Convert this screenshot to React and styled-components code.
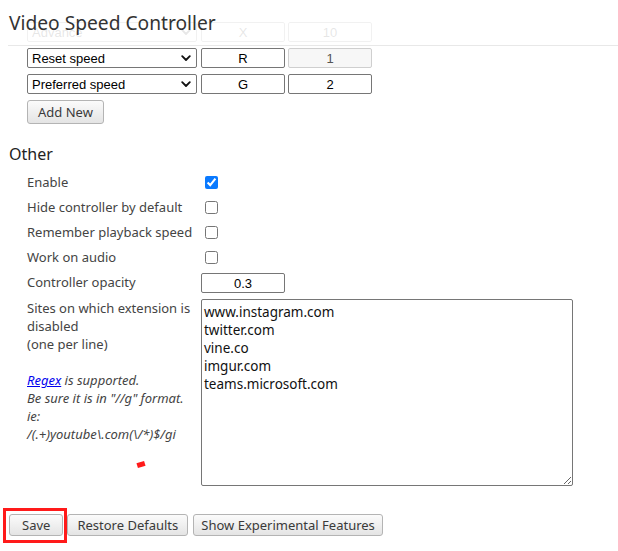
import React from "react";
import styled, { createGlobalStyle } from "styled-components";

const GlobalStyle = createGlobalStyle`
  body {
    margin: 0;
    background: #fff;
    font-family: "Noto Sans", "Liberation Sans", sans-serif;
  }
`;

const Page = styled.div`
  position: relative;
  padding: 0 0 16px 8px;
  width: 610px;
`;

const Header = styled.header`
  position: relative;
  z-index: 1;
  height: 45px;
  background: rgba(255, 255, 255, 0.9);
  border-bottom: 1px solid #e8e8e8;
`;

const Title = styled.h1`
  margin: 0;
  padding: 9px 0 0 1px;
  font-size: 19.2px;
  line-height: 28px;
  font-weight: normal;
  color: #333;
`;

const Shortcuts = styled.section`
  margin-top: -24px;
  padding-left: 19px;
  display: flex;
  flex-direction: column;
  gap: 6px;
`;

const Row = styled.div`
  display: flex;
  align-items: center;
  height: 20px;
`;

const SelectWrap = styled.div`
  position: relative;
  width: 170px;
  height: 20px;
  margin-right: 4px;
`;

const Select = styled.select`
  appearance: none;
  box-sizing: border-box;
  display: block;
  width: 100%;
  height: 100%;
  margin: 0;
  padding: 0 0 0 4px;
  border: 1px solid #767676;
  border-radius: 2px;
  background: #fff;
  font-family: "Liberation Sans", Arial, sans-serif;
  font-size: 13px;
  color: #000;
`;

const Chevron = styled.svg`
  position: absolute;
  right: 6px;
  top: 7px;
  pointer-events: none;
`;

const KeyInput = styled.input`
  box-sizing: border-box;
  width: 84px;
  height: 20px;
  margin: ${(p) => (p.$shift ? "1px 3px 0 0" : "0 3px 0 0")};
  padding: 0;
  border: 1px solid ${(p) => (p.disabled ? "#cfcfcf" : "#767676")};
  border-radius: 2px;
  background: ${(p) => (p.disabled ? "#f7f7f7" : "#fff")};
  text-align: center;
  font-family: "Liberation Sans", Arial, sans-serif;
  font-size: 13px;
  color: ${(p) => (p.disabled ? "#555" : "#000")};
  opacity: 1;
`;

const Button = styled.button`
  box-sizing: border-box;
  height: ${(p) => (p.$tall ? "24px" : "22px")};
  padding: 0 ${(p) => (p.$wide ? "12px" : p.$tall ? "10px" : "9px")};
  border: 1px solid #b4b4b4;
  border-radius: 3px;
  background: linear-gradient(#fbfbfb, #e4e4e4);
  font-family: "Noto Sans", "Liberation Sans", sans-serif;
  font-size: 13px;
  color: #3a3a3a;
  cursor: pointer;
`;

const AddNew = styled(Button)`
  align-self: flex-start;
`;

const Heading = styled.h3`
  margin: 18px 0 6px 1px;
  font-size: 16px;
  line-height: 24px;
  font-weight: normal;
  color: #222;
`;

const OptionsGrid = styled.div`
  display: grid;
  grid-template-columns: 174px 372px;
  grid-auto-rows: minmax(20px, auto);
  row-gap: 5px;
  padding-left: 19px;
`;

const Label = styled.label`
  position: relative;
  font-size: 13px;
  line-height: ${(p) => (p.$multi ? "18px" : "20px")};
  margin-top: ${(p) => (p.$multi ? "1px" : "0")};
  color: #444;
`;

const Check = styled.input.attrs({ type: "checkbox" })`
  width: 13px;
  height: 13px;
  margin: 0 0 0 4px;
  align-self: center;
  accent-color: #0a7aff;
`;

const Note = styled.em`
  display: block;
  margin-top: 18px;
  font-style: italic;
  color: #444;

  a {
    color: #0000ee;
  }
`;

const SitesArea = styled.textarea`
  box-sizing: border-box;
  width: 372px;
  height: 187px;
  margin: 1px 0 0;
  padding: 3px 2px;
  border: 1px solid #767676;
  border-radius: 2px;
  resize: both;
  font-family: "Noto Sans", "Liberation Sans", sans-serif;
  font-size: 13.5px;
  line-height: 18px;
  color: #111;
`;

const Mark = styled.span`
  position: absolute;
  left: 110px;
  top: 163px;
  width: 8px;
  height: 5px;
  background: #ff1a1a;
  transform: rotate(-18deg);
`;

const Actions = styled.div`
  display: flex;
  align-items: flex-start;
  gap: 4px;
  margin-top: 28px;
  padding-left: 1px;
`;

const Highlighted = styled.span`
  position: relative;
  display: inline-flex;
  height: 22px;

  &::after {
    content: "";
    position: absolute;
    left: -6px;
    right: -4px;
    top: -6px;
    bottom: -7px;
    border: 3px solid #ff1a1a;
    pointer-events: none;
  }
`;

const Spaced = styled(Button)`
  margin-left: 1px;
  padding: 0 7px;
`;

const shortcuts = [
  { action: "Advance", key: "X", value: "10" },
  { action: "Reset speed", key: "R", value: "1", locked: true },
  { action: "Preferred speed", key: "G", value: "2" },
];

const toggles = [
  { label: "Enable", checked: true },
  { label: "Hide controller by default" },
  { label: "Remember playback speed" },
  { label: "Work on audio" },
];

const sites = [
  "www.instagram.com",
  "twitter.com",
  "vine.co",
  "imgur.com",
  "teams.microsoft.com",
].join("\n");

function ShortcutRow({ item }) {
  return (
    <Row>
      <SelectWrap>
        <Select defaultValue={item.action}>
          <option>{item.action}</option>
        </Select>
        <Chevron width="10" height="7" viewBox="0 0 10 7">
          <path
            d="M1.2 1.2 5 5l3.8-3.8"
            fill="none"
            stroke="#111"
            strokeWidth="1.8"
            strokeLinecap="round"
            strokeLinejoin="round"
          />
        </Chevron>
      </SelectWrap>
      <KeyInput defaultValue={item.key} />
      <KeyInput defaultValue={item.value} disabled={item.locked} />
    </Row>
  );
}

export default function App() {
  return (
    <>
      <GlobalStyle />
      <Page>
        <Header>
          <Title>Video Speed Controller</Title>
        </Header>

        <Shortcuts>
          {shortcuts.map((item) => (
            <ShortcutRow key={item.action} item={item} />
          ))}
          <AddNew $tall>Add New</AddNew>
        </Shortcuts>

        <Heading>Other</Heading>
        <OptionsGrid>
          {toggles.map((t) => (
            <React.Fragment key={t.label}>
              <Label>{t.label}</Label>
              <Check defaultChecked={t.checked} />
            </React.Fragment>
          ))}
          <Label>Controller opacity</Label>
          <KeyInput defaultValue="0.3" $shift />
          <Label $multi>
            Sites on which extension is disabled
            <br />
            (one per line)
            <Note>
              <a href="#regex">Regex</a> is supported.
              <br />
              Be sure it is in "//g" format.
              <br />
              ie:
              <br />
              /(.+)youtube\.com(\/*)$/gi
            </Note>
            <Mark />
          </Label>
          <SitesArea defaultValue={sites} />
        </OptionsGrid>

        <Actions>
          <Highlighted>
            <Button $wide>Save</Button>
          </Highlighted>
          <Button>Restore Defaults</Button>
          <Spaced>Show Experimental Features</Spaced>
        </Actions>
      </Page>
    </>
  );
}
